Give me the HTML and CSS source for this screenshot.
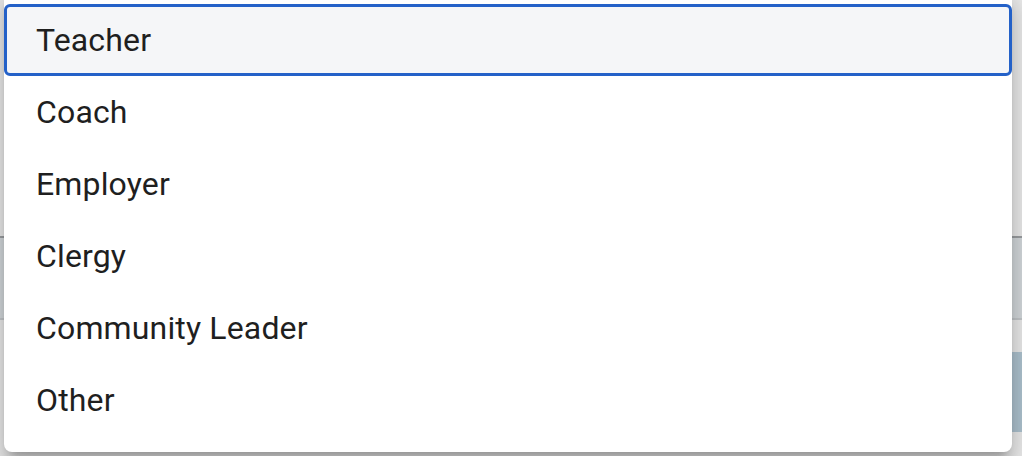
FILE: index.html
```html
<!DOCTYPE html>
<html>
<head>
<meta charset="utf-8">
<link rel="stylesheet" href="styles.css">
</head>
<body>
<div class="page">
  <div class="band band-gray"></div>
  <div class="band-row">
    <div class="band-fill"></div>
    <div class="band-button"></div>
  </div>
</div>
<ul class="menu">
  <li class="item item-focused">Teacher</li>
  <li class="item">Coach</li>
  <li class="item">Employer</li>
  <li class="item">Clergy</li>
  <li class="item">Community Leader</li>
  <li class="item">Other</li>
</ul>
</body>
</html>
```
FILE: styles.css
```css
html, body {
  margin: 0;
  padding: 0;
  width: 1022px;
  height: 456px;
  overflow: hidden;
  background: #ececec;
  font-family: Roboto, "Noto Sans", sans-serif;
}
.page {
  padding-top: 236px;
  height: 456px;
  box-sizing: border-box;
}
.band-gray {
  height: 84px;
  border-top: 2px solid #9c9fa2;
  border-bottom: 2px solid #c4c8cb;
  box-sizing: border-box;
  background: #d5dadd;
}
.band-row {
  display: flex;
  padding-top: 32px;
}
.band-fill {
  flex: 1;
}
.band-button {
  width: 40px;
  height: 80px;
  background: #afc4d1;
}
.menu {
  position: absolute;
  left: 4px;
  top: -12px;
  width: 1008px;
  margin: 0;
  padding: 16px 0;
  list-style: none;
  background: #ffffff;
  border-radius: 8px;
  box-shadow: 0 10px 10px -6px rgba(0,0,0,.2), 0 16px 20px 2px rgba(0,0,0,.14), 0 6px 28px 4px rgba(0,0,0,.12);
  box-sizing: border-box;
}
.item {
  height: 72px;
  display: flex;
  align-items: center;
  padding-left: 32px;
  font-size: 32px;
  color: #1f1f1f;
  letter-spacing: 0.15px;
  box-sizing: border-box;
}
.item-focused {
  background: #f5f6f8;
  border: 3px solid #2461c8;
  border-radius: 6px;
  padding-left: 29px;
}
```
